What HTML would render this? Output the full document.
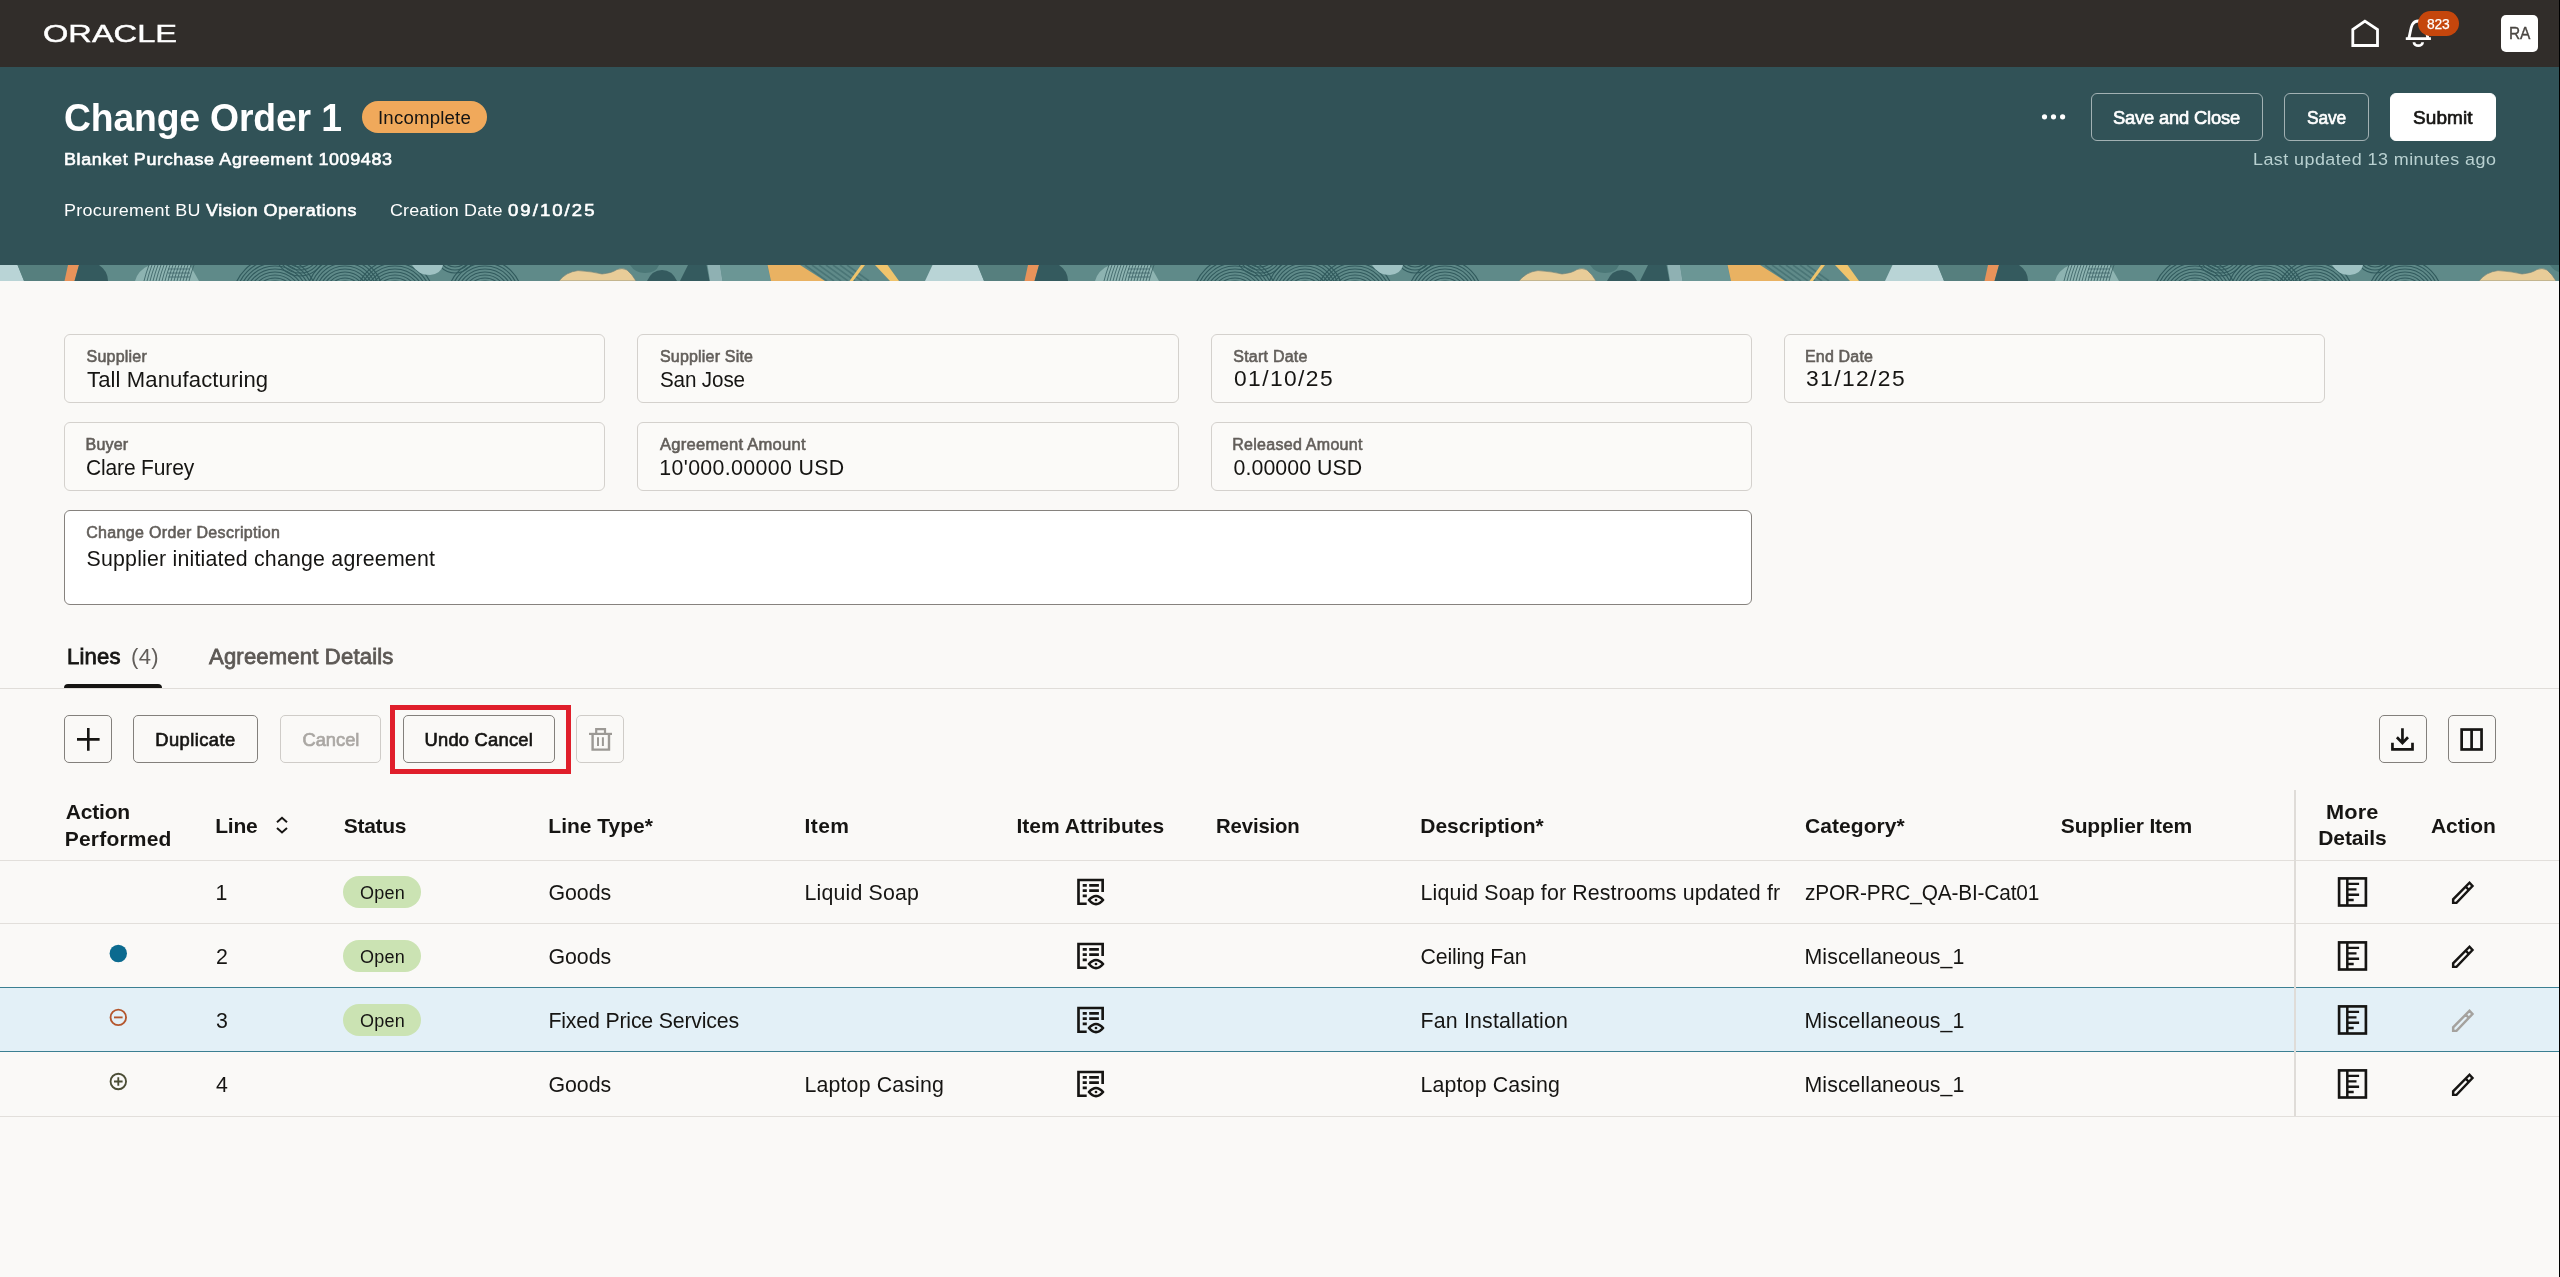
<!DOCTYPE html>
<html lang="en">
<head>
<meta charset="utf-8">
<title>Change Order 1</title>
<style>
*{box-sizing:border-box;margin:0;padding:0}
html,body{width:2560px;height:1277px;overflow:hidden;background:#faf9f7;font-family:"Liberation Sans",Arial,sans-serif}
.abs,.t,.box,svg{position:absolute}
.t{white-space:nowrap;display:block}
#topbar{left:0;top:0;width:2560px;height:67px;background:#312d2a}
#hdr{left:0;top:67px;width:2560px;height:198px;background:#315257}
#strip{left:0;top:265px;width:2560px;height:16px;background:#5f8a89;overflow:hidden}
.field{border:1px solid #d4d1cd;border-radius:6px;background:#fbfaf8;height:69px;width:541px}
.btn{border:1px solid #83807c;border-radius:5px;height:48px}
.btn.dis{border-color:#cfccc8}
.hbtn{border:1px solid rgba(255,255,255,.55);border-radius:6px;height:48px;top:93px}
.pill{border-radius:16px;height:32px}
.hl{left:0;width:2560px;height:1px;background:#e2dfdb}
</style>
</head>
<body>
<div id="topbar" class="abs"></div>
<div id="hdr" class="abs"></div>
<div id="strip" class="abs"><svg style="left:0;top:0" width="2560" height="16" viewBox="0 0 2560 16"><g transform="translate(0 0)"><path d="M-27.5 0 H17.5 L24 16 H-35 Z" fill="#b9d4d6"/><path d="M17.5 0 H68 L64.5 16 H24 Z" fill="#567f7e"/><path d="M68 0 H79 L74.5 16 H64.5 Z" fill="#e8935a"/><path d="M79 0 H99 Q108 6 108 16 H74.5 Z" fill="#345a5e"/><path d="M150 0 H190 L199 16 H135 Q138 5 150 0 Z" fill="#8db3b1"/><path d="M149 0 Q146 8 144 16" stroke="#3f6669" stroke-width="0.9" fill="none"/><path d="M152 0 Q149 8 147 16" stroke="#3f6669" stroke-width="0.9" fill="none"/><path d="M155 0 Q152 8 150 16" stroke="#3f6669" stroke-width="0.9" fill="none"/><path d="M158 0 Q155 8 153 16" stroke="#3f6669" stroke-width="0.9" fill="none"/><path d="M161 0 Q158 8 156 16" stroke="#3f6669" stroke-width="0.9" fill="none"/><path d="M164 0 Q161 8 159 16" stroke="#3f6669" stroke-width="0.9" fill="none"/><path d="M167 0 Q164 8 162 16" stroke="#3f6669" stroke-width="0.9" fill="none"/><path d="M170 0 Q167 8 165 16" stroke="#3f6669" stroke-width="0.9" fill="none"/><path d="M173 0 Q170 8 168 16" stroke="#3f6669" stroke-width="0.9" fill="none"/><path d="M176 0 Q173 8 171 16" stroke="#3f6669" stroke-width="0.9" fill="none"/><path d="M179 0 Q176 8 174 16" stroke="#3f6669" stroke-width="0.9" fill="none"/><path d="M182 0 Q179 8 177 16" stroke="#3f6669" stroke-width="0.9" fill="none"/><path d="M185 0 Q182 8 180 16" stroke="#3f6669" stroke-width="0.9" fill="none"/><path d="M188 0 Q185 8 183 16" stroke="#3f6669" stroke-width="0.9" fill="none"/><path d="M191 0 Q188 8 186 16" stroke="#3f6669" stroke-width="0.9" fill="none"/><path d="M194 0 Q191 8 189 16" stroke="#3f6669" stroke-width="0.9" fill="none"/><path d="M168 4 H190" stroke="#3f6669" stroke-width="0.8"/><path d="M168 8 H190" stroke="#3f6669" stroke-width="0.8"/><path d="M168 12 H190" stroke="#3f6669" stroke-width="0.8"/><circle cx="275" cy="34" r="18" stroke="#315a5d" stroke-width="1.15" fill="none"/><circle cx="275" cy="34" r="21" stroke="#315a5d" stroke-width="1.15" fill="none"/><circle cx="275" cy="34" r="24" stroke="#315a5d" stroke-width="1.15" fill="none"/><circle cx="275" cy="34" r="27" stroke="#315a5d" stroke-width="1.15" fill="none"/><circle cx="275" cy="34" r="30" stroke="#315a5d" stroke-width="1.15" fill="none"/><circle cx="275" cy="34" r="33" stroke="#315a5d" stroke-width="1.15" fill="none"/><circle cx="275" cy="34" r="36" stroke="#315a5d" stroke-width="1.15" fill="none"/><circle cx="275" cy="34" r="39" stroke="#315a5d" stroke-width="1.15" fill="none"/><circle cx="275" cy="34" r="42" stroke="#315a5d" stroke-width="1.15" fill="none"/><circle cx="345" cy="30" r="14" stroke="#315a5d" stroke-width="1.15" fill="none"/><circle cx="345" cy="30" r="17" stroke="#315a5d" stroke-width="1.15" fill="none"/><circle cx="345" cy="30" r="20" stroke="#315a5d" stroke-width="1.15" fill="none"/><circle cx="345" cy="30" r="23" stroke="#315a5d" stroke-width="1.15" fill="none"/><circle cx="345" cy="30" r="26" stroke="#315a5d" stroke-width="1.15" fill="none"/><circle cx="345" cy="30" r="29" stroke="#315a5d" stroke-width="1.15" fill="none"/><circle cx="345" cy="30" r="32" stroke="#315a5d" stroke-width="1.15" fill="none"/><circle cx="345" cy="30" r="35" stroke="#315a5d" stroke-width="1.15" fill="none"/><circle cx="345" cy="30" r="38" stroke="#315a5d" stroke-width="1.15" fill="none"/><circle cx="300" cy="-14" r="10" stroke="#315a5d" stroke-width="1.15" fill="none"/><circle cx="300" cy="-14" r="13" stroke="#315a5d" stroke-width="1.15" fill="none"/><circle cx="300" cy="-14" r="16" stroke="#315a5d" stroke-width="1.15" fill="none"/><circle cx="300" cy="-14" r="19" stroke="#315a5d" stroke-width="1.15" fill="none"/><circle cx="300" cy="-14" r="22" stroke="#315a5d" stroke-width="1.15" fill="none"/><circle cx="300" cy="-14" r="25" stroke="#315a5d" stroke-width="1.15" fill="none"/><circle cx="395" cy="34" r="18" stroke="#315a5d" stroke-width="1.15" fill="none"/><circle cx="395" cy="34" r="21" stroke="#315a5d" stroke-width="1.15" fill="none"/><circle cx="395" cy="34" r="24" stroke="#315a5d" stroke-width="1.15" fill="none"/><circle cx="395" cy="34" r="27" stroke="#315a5d" stroke-width="1.15" fill="none"/><circle cx="395" cy="34" r="30" stroke="#315a5d" stroke-width="1.15" fill="none"/><circle cx="395" cy="34" r="33" stroke="#315a5d" stroke-width="1.15" fill="none"/><circle cx="395" cy="34" r="36" stroke="#315a5d" stroke-width="1.15" fill="none"/><circle cx="395" cy="34" r="39" stroke="#315a5d" stroke-width="1.15" fill="none"/><circle cx="485" cy="32" r="16" stroke="#315a5d" stroke-width="1.15" fill="none"/><circle cx="485" cy="32" r="19" stroke="#315a5d" stroke-width="1.15" fill="none"/><circle cx="485" cy="32" r="22" stroke="#315a5d" stroke-width="1.15" fill="none"/><circle cx="485" cy="32" r="25" stroke="#315a5d" stroke-width="1.15" fill="none"/><circle cx="485" cy="32" r="28" stroke="#315a5d" stroke-width="1.15" fill="none"/><circle cx="485" cy="32" r="31" stroke="#315a5d" stroke-width="1.15" fill="none"/><circle cx="485" cy="32" r="34" stroke="#315a5d" stroke-width="1.15" fill="none"/><circle cx="485" cy="32" r="37" stroke="#315a5d" stroke-width="1.15" fill="none"/><circle cx="455" cy="-12" r="8" stroke="#315a5d" stroke-width="1.15" fill="none"/><circle cx="455" cy="-12" r="11" stroke="#315a5d" stroke-width="1.15" fill="none"/><circle cx="455" cy="-12" r="14" stroke="#315a5d" stroke-width="1.15" fill="none"/><circle cx="455" cy="-12" r="17" stroke="#315a5d" stroke-width="1.15" fill="none"/><circle cx="455" cy="-12" r="20" stroke="#315a5d" stroke-width="1.15" fill="none"/><path d="M412 0 H443 Q441 9 430 10 Q418 10 412 0 Z" fill="#9fc2c3"/><path d="M559 16 Q566 7 578 5.6 Q592 6.5 602 9 Q612 8 617 4.5 Q622 2.5 627 5 Q632 9 636 16 Z" fill="#e8cc98" stroke="#6d7f78" stroke-width="0.6"/><path d="M630 0 H659 Q656 8 645 8 Q635 8 630 0 Z" fill="#4b7777"/><path d="M647 16 Q652 5 662 5 Q672 5 677 16 Z" fill="#345a5e"/><path d="M688 0 H706.5 L709.5 16 H680 Z" fill="#345a5e"/><path d="M707.5 0 H720 L722.5 16 H710 Z" fill="#8fb1b3"/><path d="M720 0 H767 L771 16 H722.5 Z" fill="#6b9695"/><path d="M767.5 0 H800 L825 16 H771 Z" fill="#e9b262"/><path d="M805 0 L827 16" stroke="#4a7576" stroke-width="1.6"/><path d="M812 0 L834 16" stroke="#4a7576" stroke-width="1.6"/><path d="M819 0 L841 16" stroke="#4a7576" stroke-width="1.6"/><path d="M826 0 L848 16" stroke="#4a7576" stroke-width="1.6"/><path d="M833 0 L855 16" stroke="#4a7576" stroke-width="1.6"/><path d="M840 0 L862 16" stroke="#4a7576" stroke-width="1.6"/><path d="M847 0 L869 16" stroke="#4a7576" stroke-width="1.6"/><path d="M861 0 H865 L853 16 H849.5 Z" fill="#f0c46c"/><path d="M875 0 H887.5 L899 16 H890 Z" fill="#f0c46c"/></g><g transform="translate(960 0)"><path d="M-27.5 0 H17.5 L24 16 H-35 Z" fill="#b9d4d6"/><path d="M17.5 0 H68 L64.5 16 H24 Z" fill="#567f7e"/><path d="M68 0 H79 L74.5 16 H64.5 Z" fill="#e8935a"/><path d="M79 0 H99 Q108 6 108 16 H74.5 Z" fill="#345a5e"/><path d="M150 0 H190 L199 16 H135 Q138 5 150 0 Z" fill="#8db3b1"/><path d="M149 0 Q146 8 144 16" stroke="#3f6669" stroke-width="0.9" fill="none"/><path d="M152 0 Q149 8 147 16" stroke="#3f6669" stroke-width="0.9" fill="none"/><path d="M155 0 Q152 8 150 16" stroke="#3f6669" stroke-width="0.9" fill="none"/><path d="M158 0 Q155 8 153 16" stroke="#3f6669" stroke-width="0.9" fill="none"/><path d="M161 0 Q158 8 156 16" stroke="#3f6669" stroke-width="0.9" fill="none"/><path d="M164 0 Q161 8 159 16" stroke="#3f6669" stroke-width="0.9" fill="none"/><path d="M167 0 Q164 8 162 16" stroke="#3f6669" stroke-width="0.9" fill="none"/><path d="M170 0 Q167 8 165 16" stroke="#3f6669" stroke-width="0.9" fill="none"/><path d="M173 0 Q170 8 168 16" stroke="#3f6669" stroke-width="0.9" fill="none"/><path d="M176 0 Q173 8 171 16" stroke="#3f6669" stroke-width="0.9" fill="none"/><path d="M179 0 Q176 8 174 16" stroke="#3f6669" stroke-width="0.9" fill="none"/><path d="M182 0 Q179 8 177 16" stroke="#3f6669" stroke-width="0.9" fill="none"/><path d="M185 0 Q182 8 180 16" stroke="#3f6669" stroke-width="0.9" fill="none"/><path d="M188 0 Q185 8 183 16" stroke="#3f6669" stroke-width="0.9" fill="none"/><path d="M191 0 Q188 8 186 16" stroke="#3f6669" stroke-width="0.9" fill="none"/><path d="M194 0 Q191 8 189 16" stroke="#3f6669" stroke-width="0.9" fill="none"/><path d="M168 4 H190" stroke="#3f6669" stroke-width="0.8"/><path d="M168 8 H190" stroke="#3f6669" stroke-width="0.8"/><path d="M168 12 H190" stroke="#3f6669" stroke-width="0.8"/><circle cx="275" cy="34" r="18" stroke="#315a5d" stroke-width="1.15" fill="none"/><circle cx="275" cy="34" r="21" stroke="#315a5d" stroke-width="1.15" fill="none"/><circle cx="275" cy="34" r="24" stroke="#315a5d" stroke-width="1.15" fill="none"/><circle cx="275" cy="34" r="27" stroke="#315a5d" stroke-width="1.15" fill="none"/><circle cx="275" cy="34" r="30" stroke="#315a5d" stroke-width="1.15" fill="none"/><circle cx="275" cy="34" r="33" stroke="#315a5d" stroke-width="1.15" fill="none"/><circle cx="275" cy="34" r="36" stroke="#315a5d" stroke-width="1.15" fill="none"/><circle cx="275" cy="34" r="39" stroke="#315a5d" stroke-width="1.15" fill="none"/><circle cx="275" cy="34" r="42" stroke="#315a5d" stroke-width="1.15" fill="none"/><circle cx="345" cy="30" r="14" stroke="#315a5d" stroke-width="1.15" fill="none"/><circle cx="345" cy="30" r="17" stroke="#315a5d" stroke-width="1.15" fill="none"/><circle cx="345" cy="30" r="20" stroke="#315a5d" stroke-width="1.15" fill="none"/><circle cx="345" cy="30" r="23" stroke="#315a5d" stroke-width="1.15" fill="none"/><circle cx="345" cy="30" r="26" stroke="#315a5d" stroke-width="1.15" fill="none"/><circle cx="345" cy="30" r="29" stroke="#315a5d" stroke-width="1.15" fill="none"/><circle cx="345" cy="30" r="32" stroke="#315a5d" stroke-width="1.15" fill="none"/><circle cx="345" cy="30" r="35" stroke="#315a5d" stroke-width="1.15" fill="none"/><circle cx="345" cy="30" r="38" stroke="#315a5d" stroke-width="1.15" fill="none"/><circle cx="300" cy="-14" r="10" stroke="#315a5d" stroke-width="1.15" fill="none"/><circle cx="300" cy="-14" r="13" stroke="#315a5d" stroke-width="1.15" fill="none"/><circle cx="300" cy="-14" r="16" stroke="#315a5d" stroke-width="1.15" fill="none"/><circle cx="300" cy="-14" r="19" stroke="#315a5d" stroke-width="1.15" fill="none"/><circle cx="300" cy="-14" r="22" stroke="#315a5d" stroke-width="1.15" fill="none"/><circle cx="300" cy="-14" r="25" stroke="#315a5d" stroke-width="1.15" fill="none"/><circle cx="395" cy="34" r="18" stroke="#315a5d" stroke-width="1.15" fill="none"/><circle cx="395" cy="34" r="21" stroke="#315a5d" stroke-width="1.15" fill="none"/><circle cx="395" cy="34" r="24" stroke="#315a5d" stroke-width="1.15" fill="none"/><circle cx="395" cy="34" r="27" stroke="#315a5d" stroke-width="1.15" fill="none"/><circle cx="395" cy="34" r="30" stroke="#315a5d" stroke-width="1.15" fill="none"/><circle cx="395" cy="34" r="33" stroke="#315a5d" stroke-width="1.15" fill="none"/><circle cx="395" cy="34" r="36" stroke="#315a5d" stroke-width="1.15" fill="none"/><circle cx="395" cy="34" r="39" stroke="#315a5d" stroke-width="1.15" fill="none"/><circle cx="485" cy="32" r="16" stroke="#315a5d" stroke-width="1.15" fill="none"/><circle cx="485" cy="32" r="19" stroke="#315a5d" stroke-width="1.15" fill="none"/><circle cx="485" cy="32" r="22" stroke="#315a5d" stroke-width="1.15" fill="none"/><circle cx="485" cy="32" r="25" stroke="#315a5d" stroke-width="1.15" fill="none"/><circle cx="485" cy="32" r="28" stroke="#315a5d" stroke-width="1.15" fill="none"/><circle cx="485" cy="32" r="31" stroke="#315a5d" stroke-width="1.15" fill="none"/><circle cx="485" cy="32" r="34" stroke="#315a5d" stroke-width="1.15" fill="none"/><circle cx="485" cy="32" r="37" stroke="#315a5d" stroke-width="1.15" fill="none"/><circle cx="455" cy="-12" r="8" stroke="#315a5d" stroke-width="1.15" fill="none"/><circle cx="455" cy="-12" r="11" stroke="#315a5d" stroke-width="1.15" fill="none"/><circle cx="455" cy="-12" r="14" stroke="#315a5d" stroke-width="1.15" fill="none"/><circle cx="455" cy="-12" r="17" stroke="#315a5d" stroke-width="1.15" fill="none"/><circle cx="455" cy="-12" r="20" stroke="#315a5d" stroke-width="1.15" fill="none"/><path d="M412 0 H443 Q441 9 430 10 Q418 10 412 0 Z" fill="#9fc2c3"/><path d="M559 16 Q566 7 578 5.6 Q592 6.5 602 9 Q612 8 617 4.5 Q622 2.5 627 5 Q632 9 636 16 Z" fill="#e8cc98" stroke="#6d7f78" stroke-width="0.6"/><path d="M630 0 H659 Q656 8 645 8 Q635 8 630 0 Z" fill="#4b7777"/><path d="M647 16 Q652 5 662 5 Q672 5 677 16 Z" fill="#345a5e"/><path d="M688 0 H706.5 L709.5 16 H680 Z" fill="#345a5e"/><path d="M707.5 0 H720 L722.5 16 H710 Z" fill="#8fb1b3"/><path d="M720 0 H767 L771 16 H722.5 Z" fill="#6b9695"/><path d="M767.5 0 H800 L825 16 H771 Z" fill="#e9b262"/><path d="M805 0 L827 16" stroke="#4a7576" stroke-width="1.6"/><path d="M812 0 L834 16" stroke="#4a7576" stroke-width="1.6"/><path d="M819 0 L841 16" stroke="#4a7576" stroke-width="1.6"/><path d="M826 0 L848 16" stroke="#4a7576" stroke-width="1.6"/><path d="M833 0 L855 16" stroke="#4a7576" stroke-width="1.6"/><path d="M840 0 L862 16" stroke="#4a7576" stroke-width="1.6"/><path d="M847 0 L869 16" stroke="#4a7576" stroke-width="1.6"/><path d="M861 0 H865 L853 16 H849.5 Z" fill="#f0c46c"/><path d="M875 0 H887.5 L899 16 H890 Z" fill="#f0c46c"/></g><g transform="translate(1920 0)"><path d="M-27.5 0 H17.5 L24 16 H-35 Z" fill="#b9d4d6"/><path d="M17.5 0 H68 L64.5 16 H24 Z" fill="#567f7e"/><path d="M68 0 H79 L74.5 16 H64.5 Z" fill="#e8935a"/><path d="M79 0 H99 Q108 6 108 16 H74.5 Z" fill="#345a5e"/><path d="M150 0 H190 L199 16 H135 Q138 5 150 0 Z" fill="#8db3b1"/><path d="M149 0 Q146 8 144 16" stroke="#3f6669" stroke-width="0.9" fill="none"/><path d="M152 0 Q149 8 147 16" stroke="#3f6669" stroke-width="0.9" fill="none"/><path d="M155 0 Q152 8 150 16" stroke="#3f6669" stroke-width="0.9" fill="none"/><path d="M158 0 Q155 8 153 16" stroke="#3f6669" stroke-width="0.9" fill="none"/><path d="M161 0 Q158 8 156 16" stroke="#3f6669" stroke-width="0.9" fill="none"/><path d="M164 0 Q161 8 159 16" stroke="#3f6669" stroke-width="0.9" fill="none"/><path d="M167 0 Q164 8 162 16" stroke="#3f6669" stroke-width="0.9" fill="none"/><path d="M170 0 Q167 8 165 16" stroke="#3f6669" stroke-width="0.9" fill="none"/><path d="M173 0 Q170 8 168 16" stroke="#3f6669" stroke-width="0.9" fill="none"/><path d="M176 0 Q173 8 171 16" stroke="#3f6669" stroke-width="0.9" fill="none"/><path d="M179 0 Q176 8 174 16" stroke="#3f6669" stroke-width="0.9" fill="none"/><path d="M182 0 Q179 8 177 16" stroke="#3f6669" stroke-width="0.9" fill="none"/><path d="M185 0 Q182 8 180 16" stroke="#3f6669" stroke-width="0.9" fill="none"/><path d="M188 0 Q185 8 183 16" stroke="#3f6669" stroke-width="0.9" fill="none"/><path d="M191 0 Q188 8 186 16" stroke="#3f6669" stroke-width="0.9" fill="none"/><path d="M194 0 Q191 8 189 16" stroke="#3f6669" stroke-width="0.9" fill="none"/><path d="M168 4 H190" stroke="#3f6669" stroke-width="0.8"/><path d="M168 8 H190" stroke="#3f6669" stroke-width="0.8"/><path d="M168 12 H190" stroke="#3f6669" stroke-width="0.8"/><circle cx="275" cy="34" r="18" stroke="#315a5d" stroke-width="1.15" fill="none"/><circle cx="275" cy="34" r="21" stroke="#315a5d" stroke-width="1.15" fill="none"/><circle cx="275" cy="34" r="24" stroke="#315a5d" stroke-width="1.15" fill="none"/><circle cx="275" cy="34" r="27" stroke="#315a5d" stroke-width="1.15" fill="none"/><circle cx="275" cy="34" r="30" stroke="#315a5d" stroke-width="1.15" fill="none"/><circle cx="275" cy="34" r="33" stroke="#315a5d" stroke-width="1.15" fill="none"/><circle cx="275" cy="34" r="36" stroke="#315a5d" stroke-width="1.15" fill="none"/><circle cx="275" cy="34" r="39" stroke="#315a5d" stroke-width="1.15" fill="none"/><circle cx="275" cy="34" r="42" stroke="#315a5d" stroke-width="1.15" fill="none"/><circle cx="345" cy="30" r="14" stroke="#315a5d" stroke-width="1.15" fill="none"/><circle cx="345" cy="30" r="17" stroke="#315a5d" stroke-width="1.15" fill="none"/><circle cx="345" cy="30" r="20" stroke="#315a5d" stroke-width="1.15" fill="none"/><circle cx="345" cy="30" r="23" stroke="#315a5d" stroke-width="1.15" fill="none"/><circle cx="345" cy="30" r="26" stroke="#315a5d" stroke-width="1.15" fill="none"/><circle cx="345" cy="30" r="29" stroke="#315a5d" stroke-width="1.15" fill="none"/><circle cx="345" cy="30" r="32" stroke="#315a5d" stroke-width="1.15" fill="none"/><circle cx="345" cy="30" r="35" stroke="#315a5d" stroke-width="1.15" fill="none"/><circle cx="345" cy="30" r="38" stroke="#315a5d" stroke-width="1.15" fill="none"/><circle cx="300" cy="-14" r="10" stroke="#315a5d" stroke-width="1.15" fill="none"/><circle cx="300" cy="-14" r="13" stroke="#315a5d" stroke-width="1.15" fill="none"/><circle cx="300" cy="-14" r="16" stroke="#315a5d" stroke-width="1.15" fill="none"/><circle cx="300" cy="-14" r="19" stroke="#315a5d" stroke-width="1.15" fill="none"/><circle cx="300" cy="-14" r="22" stroke="#315a5d" stroke-width="1.15" fill="none"/><circle cx="300" cy="-14" r="25" stroke="#315a5d" stroke-width="1.15" fill="none"/><circle cx="395" cy="34" r="18" stroke="#315a5d" stroke-width="1.15" fill="none"/><circle cx="395" cy="34" r="21" stroke="#315a5d" stroke-width="1.15" fill="none"/><circle cx="395" cy="34" r="24" stroke="#315a5d" stroke-width="1.15" fill="none"/><circle cx="395" cy="34" r="27" stroke="#315a5d" stroke-width="1.15" fill="none"/><circle cx="395" cy="34" r="30" stroke="#315a5d" stroke-width="1.15" fill="none"/><circle cx="395" cy="34" r="33" stroke="#315a5d" stroke-width="1.15" fill="none"/><circle cx="395" cy="34" r="36" stroke="#315a5d" stroke-width="1.15" fill="none"/><circle cx="395" cy="34" r="39" stroke="#315a5d" stroke-width="1.15" fill="none"/><circle cx="485" cy="32" r="16" stroke="#315a5d" stroke-width="1.15" fill="none"/><circle cx="485" cy="32" r="19" stroke="#315a5d" stroke-width="1.15" fill="none"/><circle cx="485" cy="32" r="22" stroke="#315a5d" stroke-width="1.15" fill="none"/><circle cx="485" cy="32" r="25" stroke="#315a5d" stroke-width="1.15" fill="none"/><circle cx="485" cy="32" r="28" stroke="#315a5d" stroke-width="1.15" fill="none"/><circle cx="485" cy="32" r="31" stroke="#315a5d" stroke-width="1.15" fill="none"/><circle cx="485" cy="32" r="34" stroke="#315a5d" stroke-width="1.15" fill="none"/><circle cx="485" cy="32" r="37" stroke="#315a5d" stroke-width="1.15" fill="none"/><circle cx="455" cy="-12" r="8" stroke="#315a5d" stroke-width="1.15" fill="none"/><circle cx="455" cy="-12" r="11" stroke="#315a5d" stroke-width="1.15" fill="none"/><circle cx="455" cy="-12" r="14" stroke="#315a5d" stroke-width="1.15" fill="none"/><circle cx="455" cy="-12" r="17" stroke="#315a5d" stroke-width="1.15" fill="none"/><circle cx="455" cy="-12" r="20" stroke="#315a5d" stroke-width="1.15" fill="none"/><path d="M412 0 H443 Q441 9 430 10 Q418 10 412 0 Z" fill="#9fc2c3"/><path d="M559 16 Q566 7 578 5.6 Q592 6.5 602 9 Q612 8 617 4.5 Q622 2.5 627 5 Q632 9 636 16 Z" fill="#e8cc98" stroke="#6d7f78" stroke-width="0.6"/><path d="M630 0 H659 Q656 8 645 8 Q635 8 630 0 Z" fill="#4b7777"/><path d="M647 16 Q652 5 662 5 Q672 5 677 16 Z" fill="#345a5e"/><path d="M688 0 H706.5 L709.5 16 H680 Z" fill="#345a5e"/><path d="M707.5 0 H720 L722.5 16 H710 Z" fill="#8fb1b3"/><path d="M720 0 H767 L771 16 H722.5 Z" fill="#6b9695"/><path d="M767.5 0 H800 L825 16 H771 Z" fill="#e9b262"/><path d="M805 0 L827 16" stroke="#4a7576" stroke-width="1.6"/><path d="M812 0 L834 16" stroke="#4a7576" stroke-width="1.6"/><path d="M819 0 L841 16" stroke="#4a7576" stroke-width="1.6"/><path d="M826 0 L848 16" stroke="#4a7576" stroke-width="1.6"/><path d="M833 0 L855 16" stroke="#4a7576" stroke-width="1.6"/><path d="M840 0 L862 16" stroke="#4a7576" stroke-width="1.6"/><path d="M847 0 L869 16" stroke="#4a7576" stroke-width="1.6"/><path d="M861 0 H865 L853 16 H849.5 Z" fill="#f0c46c"/><path d="M875 0 H887.5 L899 16 H890 Z" fill="#f0c46c"/></g><g transform="translate(2880 0)"><path d="M-27.5 0 H17.5 L24 16 H-35 Z" fill="#b9d4d6"/><path d="M17.5 0 H68 L64.5 16 H24 Z" fill="#567f7e"/><path d="M68 0 H79 L74.5 16 H64.5 Z" fill="#e8935a"/><path d="M79 0 H99 Q108 6 108 16 H74.5 Z" fill="#345a5e"/><path d="M150 0 H190 L199 16 H135 Q138 5 150 0 Z" fill="#8db3b1"/><path d="M149 0 Q146 8 144 16" stroke="#3f6669" stroke-width="0.9" fill="none"/><path d="M152 0 Q149 8 147 16" stroke="#3f6669" stroke-width="0.9" fill="none"/><path d="M155 0 Q152 8 150 16" stroke="#3f6669" stroke-width="0.9" fill="none"/><path d="M158 0 Q155 8 153 16" stroke="#3f6669" stroke-width="0.9" fill="none"/><path d="M161 0 Q158 8 156 16" stroke="#3f6669" stroke-width="0.9" fill="none"/><path d="M164 0 Q161 8 159 16" stroke="#3f6669" stroke-width="0.9" fill="none"/><path d="M167 0 Q164 8 162 16" stroke="#3f6669" stroke-width="0.9" fill="none"/><path d="M170 0 Q167 8 165 16" stroke="#3f6669" stroke-width="0.9" fill="none"/><path d="M173 0 Q170 8 168 16" stroke="#3f6669" stroke-width="0.9" fill="none"/><path d="M176 0 Q173 8 171 16" stroke="#3f6669" stroke-width="0.9" fill="none"/><path d="M179 0 Q176 8 174 16" stroke="#3f6669" stroke-width="0.9" fill="none"/><path d="M182 0 Q179 8 177 16" stroke="#3f6669" stroke-width="0.9" fill="none"/><path d="M185 0 Q182 8 180 16" stroke="#3f6669" stroke-width="0.9" fill="none"/><path d="M188 0 Q185 8 183 16" stroke="#3f6669" stroke-width="0.9" fill="none"/><path d="M191 0 Q188 8 186 16" stroke="#3f6669" stroke-width="0.9" fill="none"/><path d="M194 0 Q191 8 189 16" stroke="#3f6669" stroke-width="0.9" fill="none"/><path d="M168 4 H190" stroke="#3f6669" stroke-width="0.8"/><path d="M168 8 H190" stroke="#3f6669" stroke-width="0.8"/><path d="M168 12 H190" stroke="#3f6669" stroke-width="0.8"/><circle cx="275" cy="34" r="18" stroke="#315a5d" stroke-width="1.15" fill="none"/><circle cx="275" cy="34" r="21" stroke="#315a5d" stroke-width="1.15" fill="none"/><circle cx="275" cy="34" r="24" stroke="#315a5d" stroke-width="1.15" fill="none"/><circle cx="275" cy="34" r="27" stroke="#315a5d" stroke-width="1.15" fill="none"/><circle cx="275" cy="34" r="30" stroke="#315a5d" stroke-width="1.15" fill="none"/><circle cx="275" cy="34" r="33" stroke="#315a5d" stroke-width="1.15" fill="none"/><circle cx="275" cy="34" r="36" stroke="#315a5d" stroke-width="1.15" fill="none"/><circle cx="275" cy="34" r="39" stroke="#315a5d" stroke-width="1.15" fill="none"/><circle cx="275" cy="34" r="42" stroke="#315a5d" stroke-width="1.15" fill="none"/><circle cx="345" cy="30" r="14" stroke="#315a5d" stroke-width="1.15" fill="none"/><circle cx="345" cy="30" r="17" stroke="#315a5d" stroke-width="1.15" fill="none"/><circle cx="345" cy="30" r="20" stroke="#315a5d" stroke-width="1.15" fill="none"/><circle cx="345" cy="30" r="23" stroke="#315a5d" stroke-width="1.15" fill="none"/><circle cx="345" cy="30" r="26" stroke="#315a5d" stroke-width="1.15" fill="none"/><circle cx="345" cy="30" r="29" stroke="#315a5d" stroke-width="1.15" fill="none"/><circle cx="345" cy="30" r="32" stroke="#315a5d" stroke-width="1.15" fill="none"/><circle cx="345" cy="30" r="35" stroke="#315a5d" stroke-width="1.15" fill="none"/><circle cx="345" cy="30" r="38" stroke="#315a5d" stroke-width="1.15" fill="none"/><circle cx="300" cy="-14" r="10" stroke="#315a5d" stroke-width="1.15" fill="none"/><circle cx="300" cy="-14" r="13" stroke="#315a5d" stroke-width="1.15" fill="none"/><circle cx="300" cy="-14" r="16" stroke="#315a5d" stroke-width="1.15" fill="none"/><circle cx="300" cy="-14" r="19" stroke="#315a5d" stroke-width="1.15" fill="none"/><circle cx="300" cy="-14" r="22" stroke="#315a5d" stroke-width="1.15" fill="none"/><circle cx="300" cy="-14" r="25" stroke="#315a5d" stroke-width="1.15" fill="none"/><circle cx="395" cy="34" r="18" stroke="#315a5d" stroke-width="1.15" fill="none"/><circle cx="395" cy="34" r="21" stroke="#315a5d" stroke-width="1.15" fill="none"/><circle cx="395" cy="34" r="24" stroke="#315a5d" stroke-width="1.15" fill="none"/><circle cx="395" cy="34" r="27" stroke="#315a5d" stroke-width="1.15" fill="none"/><circle cx="395" cy="34" r="30" stroke="#315a5d" stroke-width="1.15" fill="none"/><circle cx="395" cy="34" r="33" stroke="#315a5d" stroke-width="1.15" fill="none"/><circle cx="395" cy="34" r="36" stroke="#315a5d" stroke-width="1.15" fill="none"/><circle cx="395" cy="34" r="39" stroke="#315a5d" stroke-width="1.15" fill="none"/><circle cx="485" cy="32" r="16" stroke="#315a5d" stroke-width="1.15" fill="none"/><circle cx="485" cy="32" r="19" stroke="#315a5d" stroke-width="1.15" fill="none"/><circle cx="485" cy="32" r="22" stroke="#315a5d" stroke-width="1.15" fill="none"/><circle cx="485" cy="32" r="25" stroke="#315a5d" stroke-width="1.15" fill="none"/><circle cx="485" cy="32" r="28" stroke="#315a5d" stroke-width="1.15" fill="none"/><circle cx="485" cy="32" r="31" stroke="#315a5d" stroke-width="1.15" fill="none"/><circle cx="485" cy="32" r="34" stroke="#315a5d" stroke-width="1.15" fill="none"/><circle cx="485" cy="32" r="37" stroke="#315a5d" stroke-width="1.15" fill="none"/><circle cx="455" cy="-12" r="8" stroke="#315a5d" stroke-width="1.15" fill="none"/><circle cx="455" cy="-12" r="11" stroke="#315a5d" stroke-width="1.15" fill="none"/><circle cx="455" cy="-12" r="14" stroke="#315a5d" stroke-width="1.15" fill="none"/><circle cx="455" cy="-12" r="17" stroke="#315a5d" stroke-width="1.15" fill="none"/><circle cx="455" cy="-12" r="20" stroke="#315a5d" stroke-width="1.15" fill="none"/><path d="M412 0 H443 Q441 9 430 10 Q418 10 412 0 Z" fill="#9fc2c3"/><path d="M559 16 Q566 7 578 5.6 Q592 6.5 602 9 Q612 8 617 4.5 Q622 2.5 627 5 Q632 9 636 16 Z" fill="#e8cc98" stroke="#6d7f78" stroke-width="0.6"/><path d="M630 0 H659 Q656 8 645 8 Q635 8 630 0 Z" fill="#4b7777"/><path d="M647 16 Q652 5 662 5 Q672 5 677 16 Z" fill="#345a5e"/><path d="M688 0 H706.5 L709.5 16 H680 Z" fill="#345a5e"/><path d="M707.5 0 H720 L722.5 16 H710 Z" fill="#8fb1b3"/><path d="M720 0 H767 L771 16 H722.5 Z" fill="#6b9695"/><path d="M767.5 0 H800 L825 16 H771 Z" fill="#e9b262"/><path d="M805 0 L827 16" stroke="#4a7576" stroke-width="1.6"/><path d="M812 0 L834 16" stroke="#4a7576" stroke-width="1.6"/><path d="M819 0 L841 16" stroke="#4a7576" stroke-width="1.6"/><path d="M826 0 L848 16" stroke="#4a7576" stroke-width="1.6"/><path d="M833 0 L855 16" stroke="#4a7576" stroke-width="1.6"/><path d="M840 0 L862 16" stroke="#4a7576" stroke-width="1.6"/><path d="M847 0 L869 16" stroke="#4a7576" stroke-width="1.6"/><path d="M861 0 H865 L853 16 H849.5 Z" fill="#f0c46c"/><path d="M875 0 H887.5 L899 16 H890 Z" fill="#f0c46c"/></g></svg></div>

<!-- top bar icons -->
<svg style="left:2340px;top:10px" width="130" height="50" viewBox="2340 10 130 50" fill="none" stroke="#fff" stroke-width="2.8">
  <path d="M2364.9 21.2 L2377.5 29.6 V45.5 H2352.8 V29.6 Z" stroke-linejoin="miter"/>
  <path d="M2405.8 38.6 H2430.9 M2408.6 38.6 C2411.2 33 2409.5 21 2418.4 21 C2427.2 21 2425.6 33 2428.2 38.6" />
  <path d="M2414 42.2 A4.2 3.4 0 0 0 2422.6 42.2" />
</svg>
<div class="abs" style="left:2418px;top:11px;width:40.5px;height:24.5px;border-radius:12.5px;background:#c5460c"></div>
<div class="abs" style="left:2501px;top:15px;width:37px;height:37px;border-radius:5px;background:#fff"></div>

<!-- header widgets -->
<div class="abs pill" style="left:362px;top:101px;width:125px;background:#f0a95b"></div>
<svg style="left:2038px;top:110px" width="32" height="14" viewBox="2038 110 32 14" fill="#fff"><circle cx="2044.5" cy="116.8" r="2.6"/><circle cx="2053.5" cy="116.8" r="2.6"/><circle cx="2062.6" cy="116.8" r="2.6"/></svg>
<div class="abs hbtn" style="left:2091px;width:172px"></div>
<div class="abs hbtn" style="left:2284px;width:85px"></div>
<div class="abs hbtn" style="left:2390px;width:106px;background:#fff;border-color:#fff"></div>

<!-- form fields -->
<div class="abs field" style="left:64px;top:334px"></div>
<div class="abs field" style="left:637px;top:334px;width:542px"></div>
<div class="abs field" style="left:1211px;top:334px"></div>
<div class="abs field" style="left:1784px;top:334px"></div>
<div class="abs field" style="left:64px;top:422px"></div>
<div class="abs field" style="left:637px;top:422px;width:542px"></div>
<div class="abs field" style="left:1211px;top:422px"></div>
<div class="abs" style="left:64px;top:510px;width:1688px;height:95px;border:1px solid #86827e;border-radius:6px;background:#fff"></div>

<!-- tabs -->
<div class="abs hl" style="top:688px;background:#e0ddd9"></div>
<div class="abs" style="left:64px;top:684px;width:98px;height:4px;background:#161513;border-radius:4px 4px 0 0"></div>

<!-- toolbar -->
<div class="abs btn" style="left:64px;top:715px;width:48px"></div>
<div class="abs btn" style="left:133px;top:715px;width:125px"></div>
<div class="abs btn dis" style="left:280px;top:715px;width:101px"></div>
<div class="abs btn" style="left:403px;top:715px;width:152px"></div>
<div class="abs btn dis" style="left:576px;top:715px;width:48px"></div>
<div class="abs" style="left:390px;top:705px;width:181px;height:69px;border:5px solid #e01f2b"></div>
<div class="abs btn" style="left:2379px;top:715px;width:48px"></div>
<div class="abs btn" style="left:2448px;top:715px;width:48px"></div>
<svg style="left:64px;top:715px" width="560" height="48" viewBox="64 715 560 48" fill="none">
  <path d="M77 739.4 H99.6 M88.3 728 V750.8" stroke="#161513" stroke-width="2.6"/>
  <g stroke="#9c9995" stroke-width="2.2">
    <path d="M589 733.9 H612"/><path d="M596.2 733.9 V729.1 H605 V733.9"/>
    <path d="M592.6 734 V749.6 H609 V734" stroke-width="2.4"/>
    <path d="M598 737.2 V746.1 M602.9 737.2 V746.1" stroke-width="2"/>
  </g>
</svg>
<svg style="left:2379px;top:715px" width="118" height="48" viewBox="2379 715 118 48" fill="none" stroke="#161513" stroke-width="2.7">
  <path d="M2402.45 728.3 V743.2 M2396.9 737.2 L2402.45 743 L2408 737.2"/>
  <path d="M2392.45 742.8 V749.45 H2412.5 V742.8"/>
  <rect x="2461.65" y="729.55" width="19.9" height="19.9"/><path d="M2471.6 729.5 V749.5"/>
</svg>

<!-- table -->
<div class="abs" style="left:0;top:988px;width:2560px;height:63px;background:#e3f0f7"></div>
<div class="abs hl" style="top:860px"></div>
<div class="abs hl" style="top:923px"></div>
<div class="abs hl" style="top:987px;background:#3b7f92"></div>
<div class="abs hl" style="top:1051px;background:#3b7f92"></div>
<div class="abs hl" style="top:1116px"></div>
<div class="abs" style="left:2293.5px;top:790px;width:2px;height:326px;background:#dfdcd8"></div>
<div class="abs pill" style="left:343px;top:876px;width:78px;background:#cbe3b3"></div>
<div class="abs pill" style="left:343px;top:940px;width:78px;background:#cbe3b3"></div>
<div class="abs pill" style="left:343px;top:1004px;width:78px;background:#cbe3b3"></div>
<svg style="left:105px;top:940px" width="28" height="156" viewBox="105 940 28 156" fill="none"><circle cx="118.3" cy="953.5" r="8.7" fill="#0b6a8f"/><g stroke="#b4562d" stroke-width="1.85"><circle cx="118.3" cy="1017.4" r="7.75"/><path d="M114 1017.4 H122.6"/></g><g stroke="#4b4d35" stroke-width="1.85"><circle cx="118.3" cy="1081.5" r="7.75"/><path d="M114 1081.5 H122.6 M118.3 1077.2 V1085.8"/></g></svg>
<svg style="left:1070px;top:872px" width="42" height="40" viewBox="1070 872 42 40" fill="none" stroke="#161513"><path d="M1086.7 903.7 H1078.5 V880 H1102.65 V891.9" stroke-width="2.65"/><path d="M1082.7 885.3 H1086.8 M1089.2 885.3 H1098.9 M1082.7 890.55 H1086.8 M1089.2 890.55 H1098.9 M1082.7 895.85 H1086.8" stroke-width="2.7"/><path d="M1088.9 900 Q1096 891.8 1103.1 900 Q1096 908.2 1088.9 900 Z" stroke-width="2.55" stroke-linejoin="round"/><circle cx="1096" cy="900" r="1.35" fill="#161513" stroke="none"/></svg>
<svg style="left:2330px;top:870px" width="46" height="44" viewBox="2330 870 46 44" fill="none" stroke="#161513"><rect x="2339.1" y="878.4" width="26.8" height="27.1" stroke-width="2.65"/><path d="M2347.3 878.4 V905.5" stroke-width="2.5"/><path d="M2347.3 883.9 H2359.1 M2347.3 889.4 H2356.5 M2347.3 894.7 H2359.1 M2347.3 899.95 H2353.7" stroke-width="2.4"/></svg>
<svg style="left:2445px;top:874px" width="36" height="36" viewBox="2445 874 36 36" fill="none" stroke="#161513" stroke-width="2.45"><path d="M2453.15 902.85 V899.36 L2469.5 882.75 L2472.5 886 L2456.5 902.85 Z M2465.7 886.7 L2468.9 890" stroke-linejoin="miter"/></svg>
<svg style="left:1070px;top:936px" width="42" height="40" viewBox="1070 872 42 40" fill="none" stroke="#161513"><path d="M1086.7 903.7 H1078.5 V880 H1102.65 V891.9" stroke-width="2.65"/><path d="M1082.7 885.3 H1086.8 M1089.2 885.3 H1098.9 M1082.7 890.55 H1086.8 M1089.2 890.55 H1098.9 M1082.7 895.85 H1086.8" stroke-width="2.7"/><path d="M1088.9 900 Q1096 891.8 1103.1 900 Q1096 908.2 1088.9 900 Z" stroke-width="2.55" stroke-linejoin="round"/><circle cx="1096" cy="900" r="1.35" fill="#161513" stroke="none"/></svg>
<svg style="left:2330px;top:934px" width="46" height="44" viewBox="2330 870 46 44" fill="none" stroke="#161513"><rect x="2339.1" y="878.4" width="26.8" height="27.1" stroke-width="2.65"/><path d="M2347.3 878.4 V905.5" stroke-width="2.5"/><path d="M2347.3 883.9 H2359.1 M2347.3 889.4 H2356.5 M2347.3 894.7 H2359.1 M2347.3 899.95 H2353.7" stroke-width="2.4"/></svg>
<svg style="left:2445px;top:938px" width="36" height="36" viewBox="2445 874 36 36" fill="none" stroke="#161513" stroke-width="2.45"><path d="M2453.15 902.85 V899.36 L2469.5 882.75 L2472.5 886 L2456.5 902.85 Z M2465.7 886.7 L2468.9 890" stroke-linejoin="miter"/></svg>
<svg style="left:1070px;top:1000px" width="42" height="40" viewBox="1070 872 42 40" fill="none" stroke="#161513"><path d="M1086.7 903.7 H1078.5 V880 H1102.65 V891.9" stroke-width="2.65"/><path d="M1082.7 885.3 H1086.8 M1089.2 885.3 H1098.9 M1082.7 890.55 H1086.8 M1089.2 890.55 H1098.9 M1082.7 895.85 H1086.8" stroke-width="2.7"/><path d="M1088.9 900 Q1096 891.8 1103.1 900 Q1096 908.2 1088.9 900 Z" stroke-width="2.55" stroke-linejoin="round"/><circle cx="1096" cy="900" r="1.35" fill="#161513" stroke="none"/></svg>
<svg style="left:2330px;top:998px" width="46" height="44" viewBox="2330 870 46 44" fill="none" stroke="#161513"><rect x="2339.1" y="878.4" width="26.8" height="27.1" stroke-width="2.65"/><path d="M2347.3 878.4 V905.5" stroke-width="2.5"/><path d="M2347.3 883.9 H2359.1 M2347.3 889.4 H2356.5 M2347.3 894.7 H2359.1 M2347.3 899.95 H2353.7" stroke-width="2.4"/></svg>
<svg style="left:2445px;top:1002px" width="36" height="36" viewBox="2445 874 36 36" fill="none" stroke="#a5a29e" stroke-width="2.45"><path d="M2453.15 902.85 V899.36 L2469.5 882.75 L2472.5 886 L2456.5 902.85 Z M2465.7 886.7 L2468.9 890" stroke-linejoin="miter"/></svg>
<svg style="left:1070px;top:1064px" width="42" height="40" viewBox="1070 872 42 40" fill="none" stroke="#161513"><path d="M1086.7 903.7 H1078.5 V880 H1102.65 V891.9" stroke-width="2.65"/><path d="M1082.7 885.3 H1086.8 M1089.2 885.3 H1098.9 M1082.7 890.55 H1086.8 M1089.2 890.55 H1098.9 M1082.7 895.85 H1086.8" stroke-width="2.7"/><path d="M1088.9 900 Q1096 891.8 1103.1 900 Q1096 908.2 1088.9 900 Z" stroke-width="2.55" stroke-linejoin="round"/><circle cx="1096" cy="900" r="1.35" fill="#161513" stroke="none"/></svg>
<svg style="left:2330px;top:1062px" width="46" height="44" viewBox="2330 870 46 44" fill="none" stroke="#161513"><rect x="2339.1" y="878.4" width="26.8" height="27.1" stroke-width="2.65"/><path d="M2347.3 878.4 V905.5" stroke-width="2.5"/><path d="M2347.3 883.9 H2359.1 M2347.3 889.4 H2356.5 M2347.3 894.7 H2359.1 M2347.3 899.95 H2353.7" stroke-width="2.4"/></svg>
<svg style="left:2445px;top:1066px" width="36" height="36" viewBox="2445 874 36 36" fill="none" stroke="#161513" stroke-width="2.45"><path d="M2453.15 902.85 V899.36 L2469.5 882.75 L2472.5 886 L2456.5 902.85 Z M2465.7 886.7 L2468.9 890" stroke-linejoin="miter"/></svg>
<svg style="left:275px;top:815px" width="16" height="20" viewBox="275 815 16 20" fill="none" stroke="#161513" stroke-width="2"><path d="M277 822.2 L282 817.8 L287 822.2 M277 828 L282 832.4 L287 828"/></svg>

<div id="txt" class="abs" style="left:0;top:0;width:2560px;height:1277px;will-change:transform">
<span class="t" style="top:23.01px;font-size:23.6px;line-height:23.6px;color:#ffffff;-webkit-text-stroke:0.45px currentColor;left:42.8px;transform:scaleX(1.3811);transform-origin:0 0;">ORACLE</span>
<span class="t" style="top:17.00px;font-size:14.3px;line-height:14.3px;color:#ffffff;-webkit-text-stroke:0.25px currentColor;left:2426.6px;letter-spacing:-0.155px;transform:scaleX(0.9664);transform-origin:0 0;">823</span>
<span class="t" style="top:26.01px;font-size:16.0px;line-height:16.0px;color:#4a4642;-webkit-text-stroke:0.35px currentColor;left:2508.5px;letter-spacing:-0.155px;transform:scaleX(0.9673);transform-origin:0 0;">RA</span>
<span class="t" style="top:98.01px;font-size:39.0px;line-height:39.0px;color:#ffffff;font-weight:700;left:63.5px;letter-spacing:-0.157px;transform:scaleX(0.9566);transform-origin:0 0;">Change Order 1</span>
<span class="t" style="top:109.02px;font-size:18.0px;line-height:18.0px;color:#161513;left:377.8px;letter-spacing:0.173px;transform:scaleX(1.0350);transform-origin:0 0;">Incomplete</span>
<span class="t" style="top:151.01px;font-size:17.33px;line-height:17.33px;color:#ffffff;-webkit-text-stroke:0.62px currentColor;left:63.5px;letter-spacing:0.612px;transform:scaleX(1.0350);transform-origin:0 0;">Blanket Purchase Agreement 1009483</span>
<span class="t" style="top:202.01px;font-size:17.33px;line-height:17.33px;color:#ffffff;left:63.5px;letter-spacing:0.297px;transform:scaleX(1.0350);transform-origin:0 0;">Procurement BU</span>
<span class="t" style="top:202.01px;font-size:17.33px;line-height:17.33px;color:#ffffff;-webkit-text-stroke:0.62px currentColor;left:206.3px;letter-spacing:0.551px;transform:scaleX(1.0350);transform-origin:0 0;">Vision Operations</span>
<span class="t" style="top:202.01px;font-size:17.33px;line-height:17.33px;color:#ffffff;left:390.0px;letter-spacing:0.145px;transform:scaleX(1.0350);transform-origin:0 0;">Creation Date</span>
<span class="t" style="top:202.01px;font-size:17.33px;line-height:17.33px;color:#ffffff;-webkit-text-stroke:0.62px currentColor;left:508.0px;letter-spacing:1.910px;transform:scaleX(1.0700);transform-origin:0 0;">09/10/25</span>
<span class="t" style="top:109.02px;font-size:18.33px;line-height:18.33px;color:#ffffff;-webkit-text-stroke:0.66px currentColor;left:2113.0px;letter-spacing:-0.170px;">Save and Close</span>
<span class="t" style="top:109.02px;font-size:18.33px;line-height:18.33px;color:#ffffff;-webkit-text-stroke:0.66px currentColor;left:2306.8px;letter-spacing:-0.158px;transform:scaleX(0.9487);transform-origin:0 0;">Save</span>
<span class="t" style="top:109.02px;font-size:18.33px;line-height:18.33px;color:#161513;-webkit-text-stroke:0.66px currentColor;left:2413.0px;letter-spacing:0.107px;transform:scaleX(1.0350);transform-origin:0 0;">Submit</span>
<span class="t" style="top:151.00px;font-size:17.33px;line-height:17.33px;color:#b9d1d1;left:2252.8px;letter-spacing:0.430px;transform:scaleX(1.0350);transform-origin:0 0;">Last updated 13 minutes ago</span>
<span class="t" style="top:349.00px;font-size:16.0px;line-height:16.0px;color:#625e5a;-webkit-text-stroke:0.58px currentColor;left:86.5px;letter-spacing:0.232px;">Supplier</span>
<span class="t" style="top:370.01px;font-size:21.33px;line-height:21.33px;color:#161513;left:86.8px;letter-spacing:0.111px;transform:scaleX(1.0350);transform-origin:0 0;">Tall Manufacturing</span>
<span class="t" style="top:349.00px;font-size:16.0px;line-height:16.0px;color:#625e5a;-webkit-text-stroke:0.58px currentColor;left:660.0px;letter-spacing:0.182px;">Supplier Site</span>
<span class="t" style="top:370.01px;font-size:21.33px;line-height:21.33px;color:#161513;left:660.3px;letter-spacing:-0.155px;transform:scaleX(0.9680);transform-origin:0 0;">San Jose</span>
<span class="t" style="top:349.00px;font-size:16.0px;line-height:16.0px;color:#625e5a;-webkit-text-stroke:0.58px currentColor;left:1233.3px;letter-spacing:0.230px;">Start Date</span>
<span class="t" style="top:369.01px;font-size:21.33px;line-height:21.33px;color:#161513;left:1233.6px;letter-spacing:1.307px;transform:scaleX(1.0700);transform-origin:0 0;">01/10/25</span>
<span class="t" style="top:349.00px;font-size:16.0px;line-height:16.0px;color:#625e5a;-webkit-text-stroke:0.58px currentColor;left:1805.0px;letter-spacing:0.170px;">End Date</span>
<span class="t" style="top:369.01px;font-size:21.33px;line-height:21.33px;color:#161513;left:1806.3px;letter-spacing:1.307px;transform:scaleX(1.0700);transform-origin:0 0;">31/12/25</span>
<span class="t" style="top:437.00px;font-size:16.0px;line-height:16.0px;color:#625e5a;-webkit-text-stroke:0.58px currentColor;left:85.5px;letter-spacing:0.208px;">Buyer</span>
<span class="t" style="top:458.01px;font-size:21.33px;line-height:21.33px;color:#161513;left:85.8px;letter-spacing:-0.152px;transform:scaleX(0.9842);transform-origin:0 0;">Clare Furey</span>
<span class="t" style="top:437.00px;font-size:16.0px;line-height:16.0px;color:#625e5a;-webkit-text-stroke:0.58px currentColor;left:660.0px;letter-spacing:0.242px;transform:scaleX(1.0350);transform-origin:0 0;">Agreement Amount</span>
<span class="t" style="top:458.01px;font-size:21.33px;line-height:21.33px;color:#161513;left:659.3px;letter-spacing:0.355px;">10'000.00000 USD</span>
<span class="t" style="top:437.00px;font-size:16.0px;line-height:16.0px;color:#625e5a;-webkit-text-stroke:0.58px currentColor;left:1232.3px;letter-spacing:0.268px;">Released Amount</span>
<span class="t" style="top:458.01px;font-size:21.33px;line-height:21.33px;color:#161513;left:1233.6px;letter-spacing:0.055px;">0.00000 USD</span>
<span class="t" style="top:525.00px;font-size:16.0px;line-height:16.0px;color:#625e5a;-webkit-text-stroke:0.58px currentColor;left:86.2px;letter-spacing:0.340px;">Change Order Description</span>
<span class="t" style="top:549.01px;font-size:21.33px;line-height:21.33px;color:#161513;left:86.5px;letter-spacing:0.204px;">Supplier initiated change agreement</span>
<span class="t" style="top:647.01px;font-size:21.33px;line-height:21.33px;color:#161513;-webkit-text-stroke:0.77px currentColor;left:67.3px;letter-spacing:0.157px;transform:scaleX(1.0350);transform-origin:0 0;">Lines</span>
<span class="t" style="top:647.01px;font-size:21.33px;line-height:21.33px;color:#625e5a;left:131.0px;letter-spacing:0.337px;transform:scaleX(1.0350);transform-origin:0 0;">(4)</span>
<span class="t" style="top:647.01px;font-size:21.33px;line-height:21.33px;color:#5d5955;-webkit-text-stroke:0.77px currentColor;left:209.3px;letter-spacing:0.169px;transform:scaleX(1.0350);transform-origin:0 0;">Agreement Details</span>
<span class="t" style="top:731.02px;font-size:18.33px;line-height:18.33px;color:#161513;-webkit-text-stroke:0.66px currentColor;left:155.3px;letter-spacing:0.436px;">Duplicate</span>
<span class="t" style="top:731.02px;font-size:18.33px;line-height:18.33px;color:#aaa7a3;-webkit-text-stroke:0.66px currentColor;left:302.5px;letter-spacing:-0.036px;">Cancel</span>
<span class="t" style="top:731.02px;font-size:18.33px;line-height:18.33px;color:#161513;-webkit-text-stroke:0.66px currentColor;left:424.5px;letter-spacing:0.241px;">Undo Cancel</span>
<span class="t" style="top:801.01px;font-size:21.0px;line-height:21.0px;color:#161513;font-weight:700;left:65.8px;letter-spacing:-0.200px;">Action</span>
<span class="t" style="top:828.00px;font-size:21.0px;line-height:21.0px;color:#161513;font-weight:700;left:64.8px;letter-spacing:0.187px;">Performed</span>
<span class="t" style="top:815.01px;font-size:21.0px;line-height:21.0px;color:#161513;font-weight:700;left:215.3px;letter-spacing:-0.263px;">Line</span>
<span class="t" style="top:815.01px;font-size:21.0px;line-height:21.0px;color:#161513;font-weight:700;left:343.8px;letter-spacing:-0.300px;">Status</span>
<span class="t" style="top:815.01px;font-size:21.0px;line-height:21.0px;color:#161513;font-weight:700;left:548.3px;letter-spacing:0.005px;">Line Type*</span>
<span class="t" style="top:815.01px;font-size:21.0px;line-height:21.0px;color:#161513;font-weight:700;left:804.5px;letter-spacing:0.431px;">Item</span>
<span class="t" style="top:815.01px;font-size:21.0px;line-height:21.0px;color:#161513;font-weight:700;left:1016.5px;letter-spacing:0.021px;">Item Attributes</span>
<span class="t" style="top:815.01px;font-size:21.0px;line-height:21.0px;color:#161513;font-weight:700;left:1215.8px;letter-spacing:-0.155px;transform:scaleX(0.9691);transform-origin:0 0;">Revision</span>
<span class="t" style="top:815.01px;font-size:21.0px;line-height:21.0px;color:#161513;font-weight:700;left:1420.3px;letter-spacing:-0.029px;">Description*</span>
<span class="t" style="top:815.01px;font-size:21.0px;line-height:21.0px;color:#161513;font-weight:700;left:1805.0px;letter-spacing:0.060px;">Category*</span>
<span class="t" style="top:815.01px;font-size:21.0px;line-height:21.0px;color:#161513;font-weight:700;left:2060.8px;letter-spacing:-0.138px;">Supplier Item</span>
<span class="t" style="top:801.01px;font-size:21.0px;line-height:21.0px;color:#161513;font-weight:700;left:2326.3px;letter-spacing:0.132px;transform:scaleX(1.0350);transform-origin:0 0;">More</span>
<span class="t" style="top:827.01px;font-size:21.0px;line-height:21.0px;color:#161513;font-weight:700;left:2318.3px;letter-spacing:-0.098px;">Details</span>
<span class="t" style="top:815.01px;font-size:21.0px;line-height:21.0px;color:#161513;font-weight:700;left:2431.0px;letter-spacing:-0.100px;">Action</span>
<span class="t" style="top:883.01px;font-size:21.33px;line-height:21.33px;color:#161513;left:215.6px;">1</span>
<span class="t" style="top:947.01px;font-size:21.33px;line-height:21.33px;color:#161513;left:216.0px;">2</span>
<span class="t" style="top:1011.01px;font-size:21.33px;line-height:21.33px;color:#161513;left:216.0px;">3</span>
<span class="t" style="top:1075.01px;font-size:21.33px;line-height:21.33px;color:#161513;left:216.0px;">4</span>
<span class="t" style="top:884.02px;font-size:18.0px;line-height:18.0px;color:#161513;left:360.0px;letter-spacing:0.259px;">Open</span>
<span class="t" style="top:948.02px;font-size:18.0px;line-height:18.0px;color:#161513;left:360.0px;letter-spacing:0.259px;">Open</span>
<span class="t" style="top:1012.02px;font-size:18.0px;line-height:18.0px;color:#161513;left:360.0px;letter-spacing:0.259px;">Open</span>
<span class="t" style="top:883.01px;font-size:21.33px;line-height:21.33px;color:#161513;left:548.5px;letter-spacing:-0.044px;">Goods</span>
<span class="t" style="top:947.01px;font-size:21.33px;line-height:21.33px;color:#161513;left:548.5px;letter-spacing:-0.044px;">Goods</span>
<span class="t" style="top:1011.01px;font-size:21.33px;line-height:21.33px;color:#161513;left:548.5px;letter-spacing:-0.196px;">Fixed Price Services</span>
<span class="t" style="top:1075.01px;font-size:21.33px;line-height:21.33px;color:#161513;left:548.5px;letter-spacing:-0.044px;">Goods</span>
<span class="t" style="top:883.01px;font-size:21.33px;line-height:21.33px;color:#161513;left:804.5px;letter-spacing:0.170px;">Liquid Soap</span>
<span class="t" style="top:1075.01px;font-size:21.33px;line-height:21.33px;color:#161513;left:804.5px;letter-spacing:0.151px;">Laptop Casing</span>
<span class="t" style="top:883.01px;font-size:21.33px;line-height:21.33px;color:#161513;left:1420.5px;letter-spacing:0.146px;">Liquid Soap for Restrooms updated fr</span>
<span class="t" style="top:947.01px;font-size:21.33px;line-height:21.33px;color:#161513;left:1420.5px;letter-spacing:-0.172px;">Ceiling Fan</span>
<span class="t" style="top:1011.01px;font-size:21.33px;line-height:21.33px;color:#161513;left:1420.5px;letter-spacing:0.181px;">Fan Installation</span>
<span class="t" style="top:1075.01px;font-size:21.33px;line-height:21.33px;color:#161513;left:1420.5px;letter-spacing:0.151px;">Laptop Casing</span>
<span class="t" style="top:883.01px;font-size:21.33px;line-height:21.33px;color:#161513;left:1805.0px;letter-spacing:-0.154px;transform:scaleX(0.9762);transform-origin:0 0;">zPOR-PRC_QA-BI-Cat01</span>
<span class="t" style="top:947.01px;font-size:21.33px;line-height:21.33px;color:#161513;left:1804.5px;letter-spacing:0.071px;">Miscellaneous_1</span>
<span class="t" style="top:1011.01px;font-size:21.33px;line-height:21.33px;color:#161513;left:1804.5px;letter-spacing:0.071px;">Miscellaneous_1</span>
<span class="t" style="top:1075.01px;font-size:21.33px;line-height:21.33px;color:#161513;left:1804.5px;letter-spacing:0.071px;">Miscellaneous_1</span>
</div>
<div class="abs" style="left:2558.7px;top:0;width:1.3px;height:1277px;background:#000"></div>
</body>
</html>
